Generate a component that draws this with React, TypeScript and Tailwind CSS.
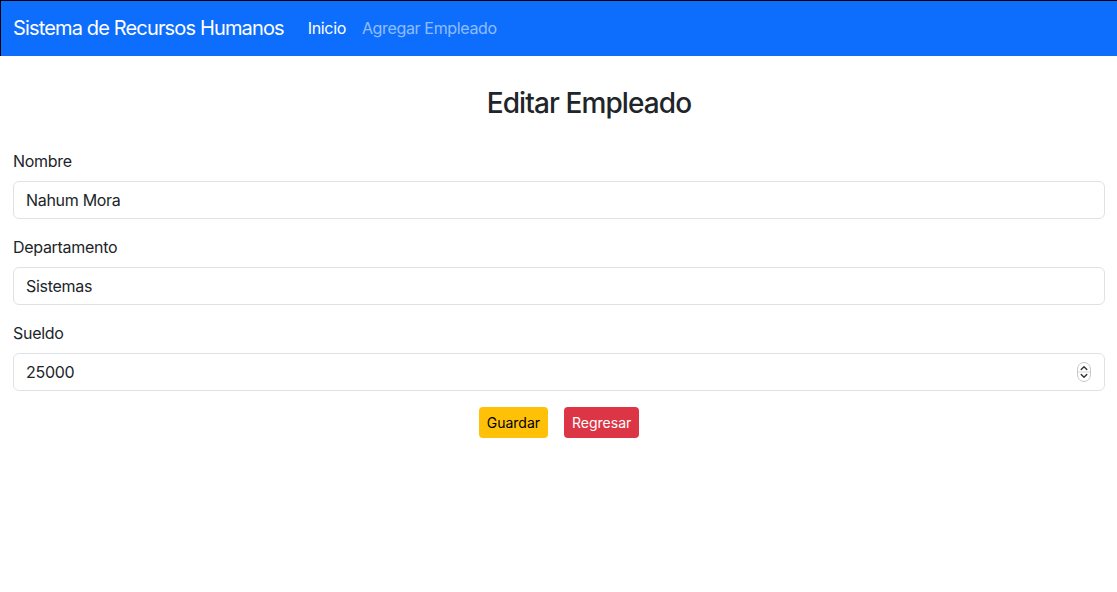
import React from "react";

const font = { fontFamily: "Inter, 'Noto Sans', 'Liberation Sans', sans-serif" };

function Spinner() {
  return (
    <svg width="14" height="20" viewBox="0 0 14 20" className="shrink-0">
      <rect x="0.5" y="0.5" width="13" height="19" rx="6.5" fill="#fff" stroke="#c8c8c8" />
      <line x1="1" y1="10" x2="13" y2="10" stroke="#d8d8d8" />
      <path d="M4.2 7.6 L7 4.8 L9.8 7.6" fill="none" stroke="#333" strokeWidth="1.4" strokeLinecap="round" strokeLinejoin="round" />
      <path d="M4.2 12.4 L7 15.2 L9.8 12.4" fill="none" stroke="#333" strokeWidth="1.4" strokeLinecap="round" strokeLinejoin="round" />
    </svg>
  );
}

function Field({ label, value, spinner }: { label: string; value: string; spinner?: boolean }) {
  return (
    <div className="mb-4">
      <div className="text-[16px] leading-[24px] tracking-[-0.3px] text-[#212529] mb-2">{label}</div>
      <div className="h-[38px] border border-[#dee2e6] rounded-[6px] pl-3 pr-[13px] flex items-center justify-between text-[16px] tracking-[-0.3px] text-[#212529]">
        <span>{value}</span>
        {spinner && <Spinner />}
      </div>
    </div>
  );
}

export default function App() {
  return (
    <div className="w-[1117px] h-[592px] bg-white overflow-hidden" style={font}>
      <nav className="h-[56px] bg-[#0d6efd] border-t border-l border-black flex items-center pl-3 pb-[2px]">
        <span className="text-white text-[20px] leading-[30px] tracking-[-0.85px] mr-4">Sistema de Recursos Humanos</span>
        <span className="text-white text-[16px] tracking-[-0.35px] px-2">Inicio</span>
        <span className="text-[rgba(255,255,255,0.55)] text-[16px] tracking-[-0.35px] px-2">Agregar Empleado</span>
      </nav>
      <div className="pl-[13px] pr-[12px]">
        <h3 className="mt-[31px] pl-[60px] text-center text-[28px] leading-[33px] tracking-[-0.9px] font-medium text-[#212529]">
          Editar Empleado
        </h3>
        <div className="mt-[29px]">
          <Field label="Nombre" value="Nahum Mora" />
          <Field label="Departamento" value="Sistemas" />
          <Field label="Sueldo" value="25000" spinner />
        </div>
        <div className="flex justify-center gap-4">
          <button className="h-[31px] px-2 rounded-[4px] bg-[#ffc107] text-black text-[14px]">Guardar</button>
          <button className="h-[31px] px-2 rounded-[4px] bg-[#dc3545] text-white text-[14px]">Regresar</button>
        </div>
      </div>
    </div>
  );
}
